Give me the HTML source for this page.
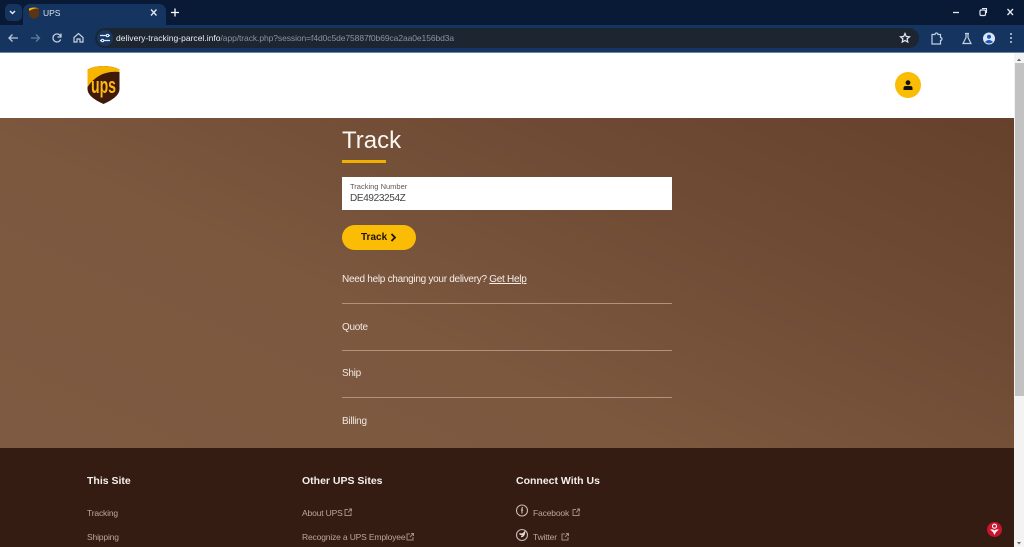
<!DOCTYPE html>
<html><head><meta charset="utf-8"><title>UPS</title>
<style>
html,body{margin:0;padding:0;width:1024px;height:547px;overflow:hidden;background:#fff;font-family:"Liberation Sans",sans-serif}
.a{position:absolute;white-space:nowrap}
svg{position:absolute;overflow:visible}
.line{position:absolute;left:342px;width:330px;height:1px;background:#b4917a}
.nav{color:#f1e9e3;font-size:10px;letter-spacing:-.28px}
.h{color:#f5f0ec;font-size:10.5px;font-weight:bold}
.l{color:#b9a79c;font-size:8.500px;letter-spacing:-.16px}
</style></head><body>
<!-- browser chrome -->
<div class="a" style="left:0;top:0;width:1024px;height:25px;background:#081a36"></div>
<div class="a" style="left:0;top:25px;width:1024px;height:27px;background:#153560"></div>
<div class="a" style="left:0;top:52px;width:1024px;height:1px;background:#6f86a3"></div>
<div class="a" style="left:5px;top:4px;width:17px;height:17px;border-radius:5px;background:#153560"></div>
<svg style="left:0;top:0" width="1024" height="52" fill="none">
<path d="M10 11l2.5 2.5L15 11" stroke="#dfe8f3" stroke-width="1.5"/>
<path d="M171 12.500h8M175 8.500v8" stroke="#fff" stroke-width="1.300"/>
<path d="M9 38h9M12.500 34.500L9 38l3.500 3.500" stroke="#b9c8da" stroke-width="1.300"/>
<path d="M31 38h8M36 34.500l3.500 3.500-3.500 3.500" stroke="#5f7b9c" stroke-width="1.300"/>
<path d="M60.500 36a4 4 0 1 0 .2 3.500M61 33.500V37h-3.500" stroke="#c6d3e2" stroke-width="1.200"/>
<path d="M74 37.500l4.500-4 4.500 4V42h-3v-3h-3v3h-3z" stroke="#c6d3e2" stroke-width="1.200"/>
<path d="M953 12.500h6" stroke="#e3e9f0" stroke-width="1.300"/>
<rect x="980" y="10" width="5.500" height="5.500" rx="1.200" stroke="#e3e9f0" stroke-width="1.200"/>
<path d="M982 8.500h4.500V13" stroke="#e3e9f0" stroke-width="1.100"/>
<path d="M1007.500 9l5.500 6M1013 9l-5.500 6" stroke="#e3e9f0" stroke-width="1.300"/>
</svg>
<div class="a" style="left:23px;top:4px;width:143px;height:21px;border-radius:7px 7px 0 0;background:#153560"></div>
<svg style="left:29px;top:7px" width="10" height="12" viewBox="0 0 10 12"><path d="M0 1.500Q5-.5 10 1.500V7q0 3-5 5Q0 10 0 7z" fill="#5b3414"/><path d="M0 4V1.500Q5-.5 10 1.500Q5 1 0 4z" fill="#f6b100"/></svg>
<div class="a" style="left:43px;top:8px;color:#d6e0ec;font-size:8.500px">UPS</div>
<svg style="left:150px;top:8px" width="10" height="10" fill="none"><path d="M1 1.500l5.500 6M6.500 1.500l-5.500 6" stroke="#e3eaf2" stroke-width="1.300"/></svg>
<div class="a" style="left:95px;top:28px;width:824px;height:20px;border-radius:10px;background:#1d2630"></div>
<div class="a" style="left:97px;top:30px;width:16px;height:16px;border-radius:8px;background:#173763"></div>
<svg style="left:100px;top:33px" width="10" height="10" fill="none" stroke="#e0e8f1" stroke-width="1.200"><path d="M0 2.500h6M9 2.500h1M0 7.500h1M4 7.500h6"/><circle cx="7.500" cy="2.500" r="1.200"/><circle cx="2.500" cy="7.500" r="1.200"/></svg>
<div class="a" style="left:116px;top:33px;font-size:8.500px;line-height:11px;color:#e9eef4;letter-spacing:.02px">delivery-tracking-parcel.info<span style="color:#8793a2;letter-spacing:-.08px">/app/track.php?session=f4d0c5de75887f0b69ca2aa0e156bd3a</span></div>
<svg style="left:900px;top:32px" width="124" height="14" fill="none">
<path d="M5 1.500l1.300 3 3.200.300-2.400 2.100.700 3.200L5 8.500l-2.800 1.600.700-3.200L.5 4.800l3.200-.300z" stroke="#e4e9ef" stroke-width="1.200"/>
<path d="M32 2.500h3a1.500 1.500 0 0 1 3 0h2.500v3a1.500 1.500 0 0 1 0 3v3.500H32z" stroke="#c3d1e1" stroke-width="1.200"/>
<path d="M65 1.500h4M66 2v3.500l-3 6h8l-3-6V2" stroke="#c3d1e1" stroke-width="1.200"/>
<circle cx="89" cy="6.500" r="6" fill="#dbe7f7"/><circle cx="89" cy="4.800" r="2" fill="#1b56b8"/><path d="M85 10q4-4 8 0q-4 3-8 0z" fill="#1b56b8"/>
<circle cx="111" cy="2" r="1" fill="#c3d1e1"/><circle cx="111" cy="6" r="1" fill="#c3d1e1"/><circle cx="111" cy="10" r="1" fill="#c3d1e1"/>
</svg>
<!-- white header -->
<div class="a" style="left:0;top:53px;width:1014px;height:65px;background:#fff"></div>
<svg style="left:87px;top:66px" width="33" height="38" viewBox="0 0 33 38">
<path d="M16.500 0Q26 0 32.500 3.500V23Q32.500 31 16.500 38Q.5 31 .5 23V3.500Q7 0 16.500 0z" fill="#3f1a0a"/>
<path d="M.5 21V3.500Q7 0 16.500 0T32.500 3.500V6Q12 4 .5 21z" fill="#f7b500"/>
<text x="16.500" y="27" text-anchor="middle" font-family="Liberation Sans" font-weight="bold" font-size="22" textLength="25" lengthAdjust="spacingAndGlyphs" fill="#fdb913">ups</text>
</svg>
<div class="a" style="left:895px;top:72px;width:26px;height:26px;border-radius:50%;background:#fbbc05"></div>
<svg style="left:903px;top:80px" width="10" height="10"><circle cx="5" cy="2.700" r="2.400" fill="#111"/><path d="M.5 10V8q0-2 2.500-2h4q2.500 0 2.500 2v2z" fill="#111"/></svg>
<!-- main -->
<div class="a" style="left:0;top:118px;width:1014px;height:330px;background:linear-gradient(205deg,#65412b 0%,#6f4b35 30%,#7c583f 62%,#7e5a42 100%)"></div>
<div class="a" style="left:342px;top:126px;color:#fbf7f3;font-size:24px;line-height:30px">Track</div>
<div class="a" style="left:342px;top:160px;width:44px;height:3px;background:#f0b000"></div>
<div class="a" style="left:342px;top:177px;width:330px;height:33px;background:#fff"></div>
<div class="a" style="left:350px;top:182px;color:#5a5a5a;font-size:7.500px;line-height:9px">Tracking Number</div>
<div class="a" style="left:350px;top:193px;color:#444;font-size:10px;letter-spacing:-.35px;line-height:12px">DE4923254Z</div>
<div class="a" style="left:342px;top:225px;width:74px;height:25px;border-radius:13px;background:#fbbc05"></div>
<div class="a" style="left:361px;top:231px;color:#1d1505;font-size:10px;font-weight:bold;line-height:13px">Track</div>
<svg style="left:390px;top:233px" width="7" height="9" fill="none"><path d="M1.500 1l3.500 3.500L1.500 8" stroke="#1d1505" stroke-width="1.800"/></svg>
<div class="a nav" style="left:342px;top:273px;line-height:13px;color:#f6efe9">Need help changing your delivery? <span style="text-decoration:underline">Get Help</span></div>
<div class="line" style="top:303px"></div>
<div class="a nav" style="left:342px;top:321px;line-height:13px">Quote</div>
<div class="line" style="top:350px"></div>
<div class="a nav" style="left:342px;top:367px;line-height:13px">Ship</div>
<div class="line" style="top:397px"></div>
<div class="a nav" style="left:342px;top:415px;line-height:13px">Billing</div>
<!-- footer -->
<div class="a" style="left:0;top:448px;width:1014px;height:99px;background:#351c13"></div>
<div class="a h" style="left:87px;top:474px;line-height:14px">This Site</div>
<div class="a h" style="left:302px;top:474px;line-height:14px">Other UPS Sites</div>
<div class="a h" style="left:516px;top:474px;line-height:14px">Connect With Us</div>
<div class="a l" style="left:87px;top:507px;line-height:12px">Tracking</div>
<div class="a l" style="left:87px;top:531px;line-height:12px">Shipping</div>
<div class="a l" style="left:302px;top:507px;line-height:12px">About UPS</div>
<div class="a l" style="left:302px;top:531px;line-height:12px">Recognize a UPS Employee</div>
<div class="a l" style="left:533px;top:507px;line-height:12px">Facebook</div>
<div class="a l" style="left:533px;top:531px;line-height:12px">Twitter</div>
<svg style="left:0;top:448px" width="1024" height="99" fill="none">
<g stroke="#a08c80" stroke-width="1"><path d="M348 61.500h-3v6h6v-3M348 64.500l3-3M349 61h2.500v2.500"/>
<path d="M410 86h-3v6h6v-3M410 89l3-3M411 85.500h2.500V88"/>
<path d="M576 61.500h-3v6h6v-3M576 64.500l3-3M577 61h2.500v2.500"/>
<path d="M565 86h-3v6h6v-3M565 89l3-3M566 85.500h2.500V88"/></g>
<circle cx="522" cy="62.500" r="5.500" stroke="#c9b9ae" stroke-width="1.100"/><path d="M523 59.500q-1 0-1 1v5M521 62h2" stroke="#d8cbc2" stroke-width="1"/>
<circle cx="522" cy="87" r="5.500" stroke="#c9b9ae" stroke-width="1.100"/><path d="M519.500 85.500q2.500 2 5-1-.5 4-3.500 4" stroke="#e3d9d2" stroke-width="1.500"/>
</svg>
<svg style="left:987px;top:522px" width="15" height="15"><circle cx="7.500" cy="7.500" r="7.500" fill="#c8142c"/><circle cx="7.500" cy="4.200" r="2" fill="none" stroke="#fff" stroke-width="1.100"/><path d="M3 7.500h3l1.500 1 1.500-1h3L9 10l-1.500 3L6 10z" fill="#fff"/></svg>
<!-- scrollbar -->
<div class="a" style="left:1014px;top:53px;width:10px;height:494px;background:#f3f3f3"></div>
<div class="a" style="left:1015px;top:63px;width:9px;height:333px;background:#c2c2c2"></div>
<svg style="left:1014px;top:53px" width="10" height="494"><path d="M3 8l2-2.500L7 8z" fill="#666"/><path d="M3 489l2 2.500 2-2.500z" fill="#666"/></svg>
</body></html>
